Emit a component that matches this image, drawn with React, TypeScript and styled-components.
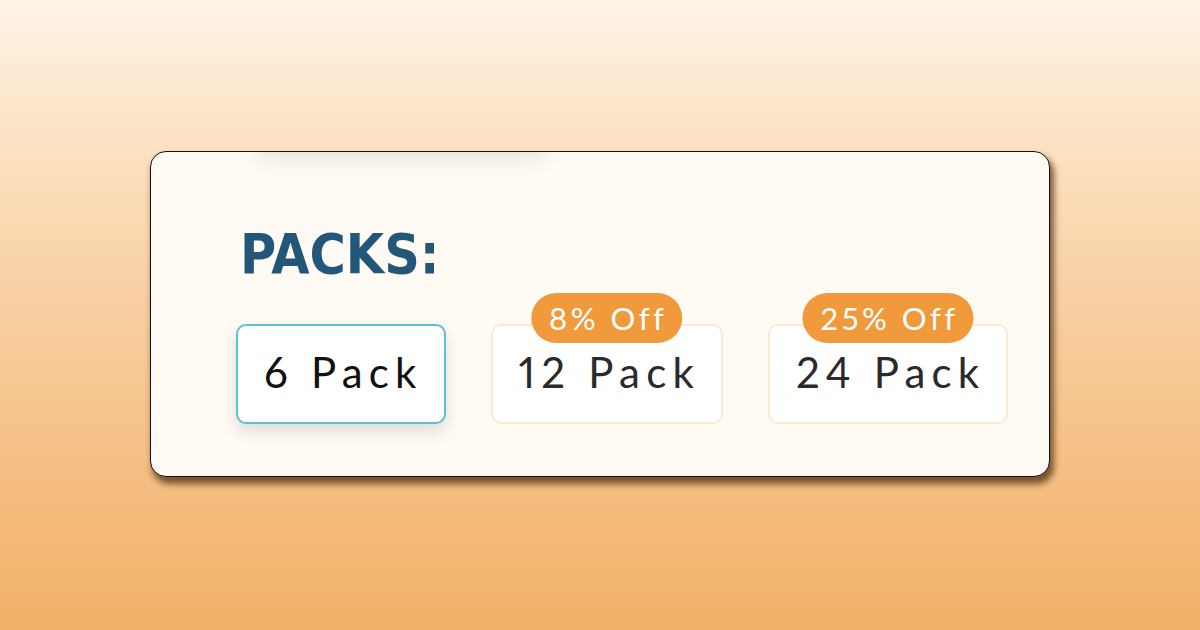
import React from "react";
import styled, { createGlobalStyle } from "styled-components";

const Global = createGlobalStyle`
  html, body { margin: 0; padding: 0; }
  body { font-family: "Lato", "Open Sans", sans-serif; }
`;

const Page = styled.div`
  width: 1200px;
  height: 630px;
  display: flex;
  align-items: center;
  justify-content: center;
  background: linear-gradient(180deg, #fef3e6 0%, #fbdcb8 30%, #f6c48e 65%, #f2b067 100%);
`;

const Card = styled.section`
  position: relative;
  box-sizing: border-box;
  width: 900px;
  height: 326px;
  margin-top: -2px;
  background: #fffbf4;
  border: 1.5px solid #161210;
  border-radius: 16px;
  box-shadow: 3px 6px 6px 1px rgba(100, 65, 30, 0.85);
  overflow: hidden;
  padding: 74px 0 0 85px;
  &::before {
    content: "";
    position: absolute;
    top: -40px;
    left: 100px;
    width: 300px;
    height: 40px;
    border-radius: 20px;
    box-shadow: 0 6px 22px rgba(0, 0, 0, 0.1);
  }
`;

const Title = styled.h2`
  margin: 0 0 0 4px;
  font-family: "DejaVu Sans Condensed", "DejaVu Sans", sans-serif;
  font-stretch: condensed;
  font-weight: 700;
  font-size: 55px;
  line-height: 56px;
  letter-spacing: 0px;
  color: #22577a;
`;

const Options = styled.div`
  display: flex;
  gap: 45px;
  margin-top: 42px;
`;

const Option = styled.button<{ $active?: boolean }>`
  position: relative;
  box-sizing: border-box;
  height: 100px;
  padding: 0 21px 4px 26px;
  background: #ffffff;
  border: 2px solid ${(p) => (p.$active ? "#5cc2cb" : "#fce9d2")};
  border-radius: 10px;
  box-shadow: ${(p) => (p.$active ? "0 8px 16px rgba(0,0,0,0.12)" : "none")};
  font-family: "Lato", sans-serif;
  font-weight: 400;
  font-size: 42px;
  font-variant-numeric: proportional-nums;
  font-feature-settings: "pnum" 1;
  letter-spacing: 6.2px;
  color: ${(p) => (p.$active ? "#111" : "#2a2a2a")};
  display: flex;
  align-items: center;
  justify-content: center;
  cursor: pointer;
`;

const Badge = styled.span`
  position: absolute;
  top: -33px;
  left: 50%;
  transform: translateX(-50%);
  height: 50px;
  padding: 0 15px 0 18px;
  border-radius: 25px;
  background: #f09a3b;
  color: #ffffff;
  font-family: "Lato", sans-serif;
  font-size: 31px;
  font-feature-settings: "pnum" 1;
  letter-spacing: 3.5px;
  white-space: nowrap;
  display: flex;
  align-items: center;
  justify-content: center;
`;

const packs = [
  { label: "6 Pack", active: true },
  { label: "12 Pack", badge: "8% Off" },
  { label: "24 Pack", badge: "25% Off" },
];

export default function App() {
  return (
    <>
      <Global />
      <Page>
        <Card>
          <Title>PACKS:</Title>
          <Options>
            {packs.map((p) => (
              <Option key={p.label} $active={p.active}>
                {p.badge && <Badge>{p.badge}</Badge>}
                {p.label}
              </Option>
            ))}
          </Options>
        </Card>
      </Page>
    </>
  );
}
